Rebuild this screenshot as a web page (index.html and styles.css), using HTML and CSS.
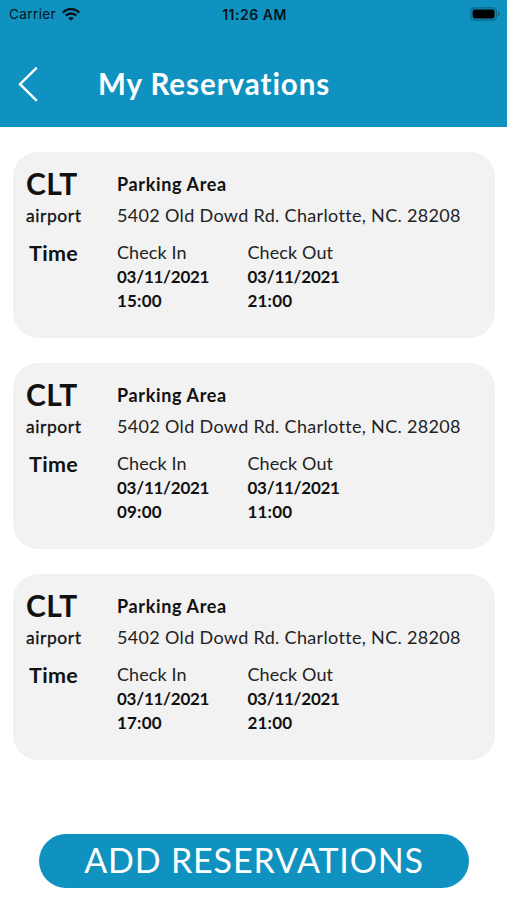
FILE: index.html
```html
<!DOCTYPE html>
<html lang="en">
<head>
<meta charset="utf-8">
<title>My Reservations</title>
<link rel="stylesheet" href="styles.css">
</head>
<body>
<header class="header">
  <div class="status">
    <div class="network">
      <span class="carrier">Carrier</span>
      <svg class="wifi" width="18" height="13" viewBox="0 0 18 13" fill="none" stroke="#03141a" stroke-width="2.5"><path d="M.8 4.6C5.3-.1 12.7-.1 17.2 4.6"/><path d="M3.7 7.6c2.9-2.9 7.7-2.9 10.6 0"/><path d="M9 12.8 6.2 10c1.6-1.5 4-1.5 5.6 0z" fill="#03141a" stroke="none"/></svg>
    </div>
    <span class="clock">11:26 AM</span>
    <svg class="battery" width="30" height="14" viewBox="0 0 30 14"><rect x=".8" y=".8" width="25.6" height="12.4" rx="3.6" fill="none" stroke="#0b6685" stroke-width="1.3"/><rect x="2.6" y="2.6" width="22" height="8.8" rx="1.8" fill="#000"/><path d="M28 4.8c2.3.8 2.3 3.6 0 4.4z" fill="#0b6685"/></svg>
  </div>
  <div class="nav">
    <svg class="back" width="20" height="36" viewBox="0 0 20 36" fill="none" stroke="#fff" stroke-width="2.4"><path d="M18.8 1.6 2 18.2 18.8 34.8"/></svg>
    <h1 class="title">My Reservations</h1>
  </div>
</header>
<main class="list">
  <article class="card">
    <div class="code">CLT</div><div class="area">Parking Area</div>
    <div class="kind">airport</div><div class="address">5402 Old Dowd Rd. Charlotte, NC. 28208</div>
    <div class="time">Time</div>
    <div class="slot"><span class="label">Check In</span><b class="date">03/11/2021</b><b class="hour">15:00</b></div>
    <div class="slot"><span class="label">Check Out</span><b class="date">03/11/2021</b><b class="hour">21:00</b></div>
  </article>
  <article class="card">
    <div class="code">CLT</div><div class="area">Parking Area</div>
    <div class="kind">airport</div><div class="address">5402 Old Dowd Rd. Charlotte, NC. 28208</div>
    <div class="time">Time</div>
    <div class="slot"><span class="label">Check In</span><b class="date">03/11/2021</b><b class="hour">09:00</b></div>
    <div class="slot"><span class="label">Check Out</span><b class="date">03/11/2021</b><b class="hour">11:00</b></div>
  </article>
  <article class="card">
    <div class="code">CLT</div><div class="area">Parking Area</div>
    <div class="kind">airport</div><div class="address">5402 Old Dowd Rd. Charlotte, NC. 28208</div>
    <div class="time">Time</div>
    <div class="slot"><span class="label">Check In</span><b class="date">03/11/2021</b><b class="hour">17:00</b></div>
    <div class="slot"><span class="label">Check Out</span><b class="date">03/11/2021</b><b class="hour">21:00</b></div>
  </article>
</main>
<button class="add">ADD RESERVATIONS</button>
</body>
</html>
```
FILE: styles.css
```css
* { box-sizing: border-box; }
body {
  margin: 0;
  height: 900px;
  background: #fff;
  color: #111;
  font-family: Lato, sans-serif;
  overflow: hidden;
}
.header { height: 126.5px; background: #1092c0; }
.status {
  display: grid;
  grid-template-columns: 1fr auto 1fr;
  align-items: center;
  height: 27px;
  padding: 0 7px 0 9px;
  color: #03141a;
  font: 13.5px/27px Inter, sans-serif;
}
.network { display: flex; align-items: center; gap: 6px; }
.carrier { padding-top: 1px; letter-spacing: .4px; }
.clock { padding-top: 1px; font-weight: 600; font-size: 14px; letter-spacing: .5px; }
.battery { justify-self: end; }
.nav { display: flex; align-items: center; height: 99px; padding: 15px 0 0 18px; }
.title {
  margin: 0 0 0 60px;
  color: #fff;
  font-size: 29.5px;
  line-height: 36px;
  font-weight: 700;
  letter-spacing: .95px;
}
.list { display: grid; gap: 25px; padding: 25px 12px 0 13px; }
.card {
  display: grid;
  grid-template-columns: 91px 130.5px 1fr;
  grid-template-rows: 34px 37px 72px;
  height: 186px;
  padding: 17.5px 13px;
  border-radius: 25px;
  background: #f2f2f2;
}
.area, .address { grid-column: 2 / 4; white-space: nowrap; }
.code { font-size: 30px; line-height: 28px; font-weight: 700; letter-spacing: .3px; }
.area { font-size: 18px; line-height: 30px; font-weight: 700; letter-spacing: .65px; }
.kind { font-size: 17.5px; line-height: 25px; -webkit-text-stroke: .3px #111; letter-spacing: .55px; }
.address { font-size: 18px; line-height: 24px; letter-spacing: .33px; color: #222; }
.time { padding-left: 3px; font-size: 21.5px; line-height: 26px; font-weight: 700; letter-spacing: .35px; }
.slot { display: flex; flex-direction: column; line-height: 24px; }
.label { font-size: 18px; line-height: 25px; letter-spacing: .1px; color: #222; }
.date, .hour { font-size: 17px; }
.date { letter-spacing: -.25px; }
.hour { letter-spacing: .2px; }
.add {
  display: block;
  width: 430px;
  height: 54px;
  margin: 74px 0 0 39px;
  padding: 0 0 3px;
  border: 0;
  border-radius: 27px;
  background: #1092c0;
  color: #fff;
  font: 34px/51px Lato, sans-serif;
  letter-spacing: .85px;
}
```
